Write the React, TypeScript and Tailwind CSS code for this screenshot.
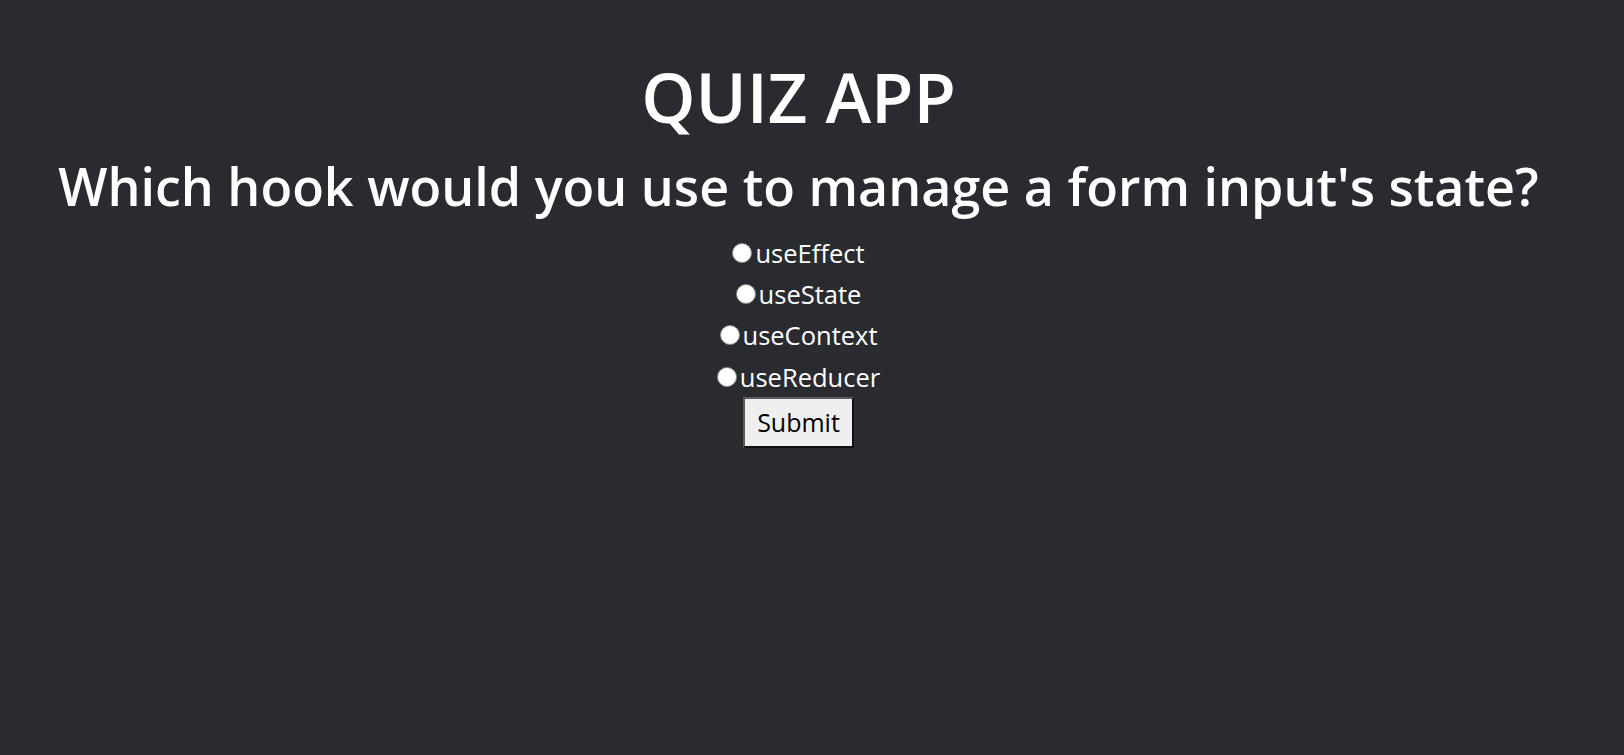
import { useState } from "react";

const OPTIONS = ["useEffect", "useState", "useContext", "useReducer"];

export default function App() {
  const [picked, setPicked] = useState<string | null>(null);

  return (
    <div className="min-h-screen w-full bg-[#2a2b30] text-white font-['Open_Sans',sans-serif]">
      <div className="flex w-[1597px] flex-col items-center pt-[60px]">
        <h1 className="text-[69px] leading-[72px] font-semibold">QUIZ APP</h1>

        <h2 className="mt-[27px] text-[52px] leading-[54px] font-semibold">
          Which hook would you use to manage a form input's state?
        </h2>

        <form
          className="mt-[19px] flex flex-col items-center"
          onSubmit={(e) => e.preventDefault()}
        >
          {OPTIONS.map((opt) => (
            <label
              key={opt}
              className="flex h-[41.3px] items-center text-[25.5px] leading-[32px]"
            >
              <input
                type="radio"
                name="answer"
                value={opt}
                checked={picked === opt}
                onChange={() => setPicked(opt)}
                className="mr-[3px] h-[20px] w-[20px] appearance-none rounded-full border-[1.5px] border-[#8a8a8a] bg-white checked:border-[5px] checked:border-[#0075ff]"
              />
              {opt}
            </label>
          ))}

          <button
            type="submit"
            className="h-[51px] w-[111px] border-2 border-t-[#5c5c5c] border-l-[#5c5c5c] border-r-[#111] border-b-[#111] bg-[#efefef] text-[25px] text-black"
          >
            Submit
          </button>
        </form>
      </div>
    </div>
  );
}
